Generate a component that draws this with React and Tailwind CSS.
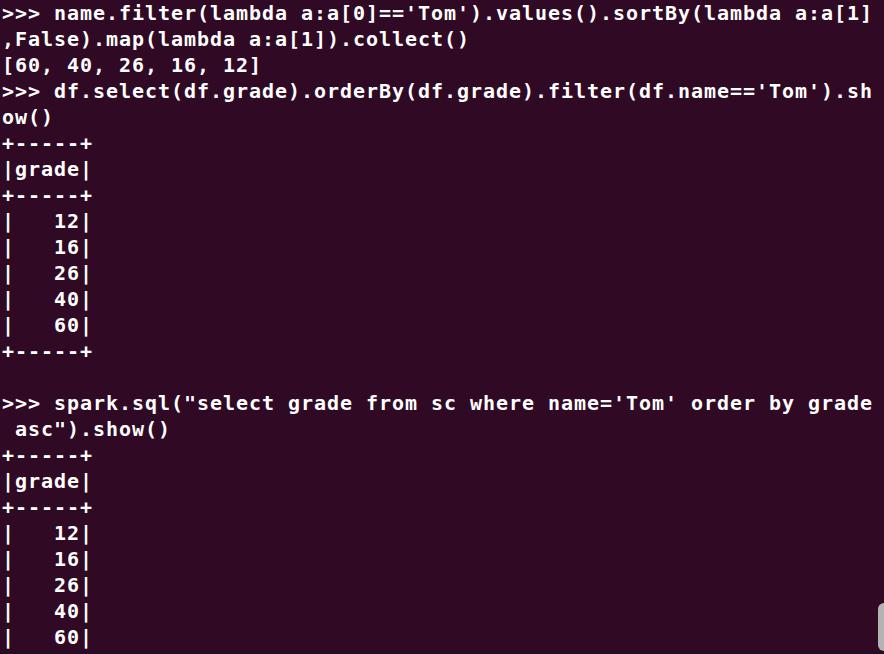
const lines = [
  ">>> name.filter(lambda a:a[0]=='Tom').values().sortBy(lambda a:a[1]",
  ",False).map(lambda a:a[1]).collect()",
  "[60, 40, 26, 16, 12]",
  ">>> df.select(df.grade).orderBy(df.grade).filter(df.name=='Tom').sh",
  "ow()",
  "+-----+",
  "|grade|",
  "+-----+",
  "|   12|",
  "|   16|",
  "|   26|",
  "|   40|",
  "|   60|",
  "+-----+",
  "",
  ">>> spark.sql(\"select grade from sc where name='Tom' order by grade",
  " asc\").show()",
  "+-----+",
  "|grade|",
  "+-----+",
  "|   12|",
  "|   16|",
  "|   26|",
  "|   40|",
  "|   60|",
];

export default function App() {
  return (
    <div className="relative w-[884px] h-[654px] overflow-hidden bg-[#300a24]">
      <div className="pl-[2px] font-['DejaVu_Sans_Mono',monospace] font-bold text-[20px] leading-[26px] tracking-[0.96px] text-white whitespace-pre">
        {lines.map((l, i) => (
          <div key={i} className="h-[26px]">{l}</div>
        ))}
      </div>
      {/* scrollbar thumb */}
      <div className="absolute right-0 top-[603px] w-[6px] h-[48px] rounded-l-full bg-[#b3b3b3]" />
      <div className="absolute left-0 bottom-0 w-full h-[2px] bg-[#1f0d2a]" />
    </div>
  );
}
